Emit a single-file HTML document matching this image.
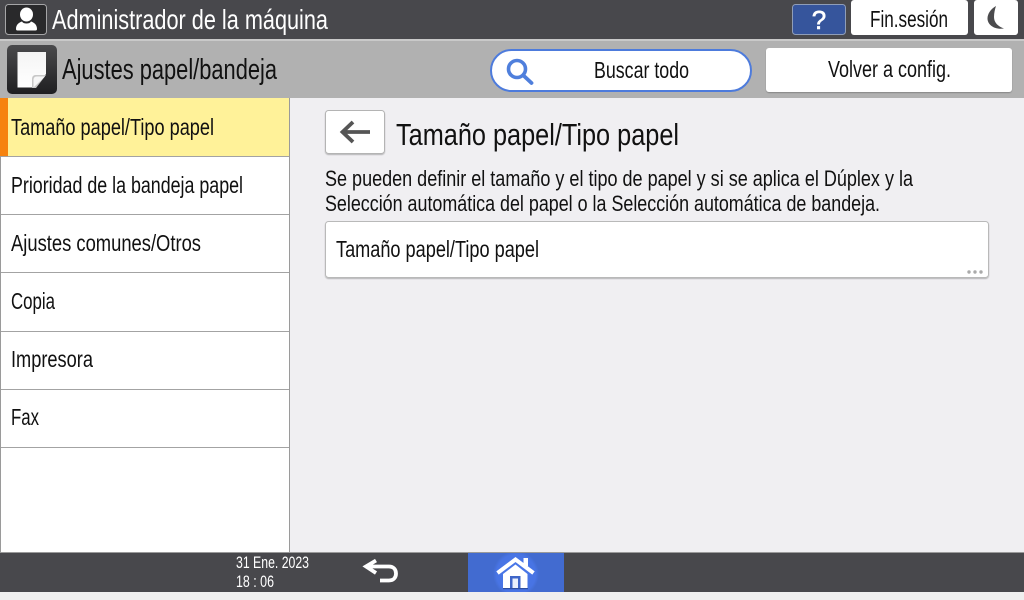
<!DOCTYPE html>
<html lang="es">
<head>
<meta charset="utf-8">
<title>Ajustes papel/bandeja</title>
<style>
html,body{margin:0;padding:0;width:1024px;height:600px;overflow:hidden;background:#f0eff2}
svg{display:block}
text{font-family:"Liberation Sans",sans-serif;fill:#111}
</style>
</head>
<body>
<svg width="1024" height="600" viewBox="0 0 1024 600" xmlns="http://www.w3.org/2000/svg">
<defs>
<linearGradient id="g1" x1="0" y1="0" x2="0" y2="1"><stop offset="0" stop-color="#4a4a4c"/><stop offset="1" stop-color="#1f1f21"/></linearGradient>
<linearGradient id="pg" x1="0" y1="0" x2="0" y2="1"><stop offset="0" stop-color="#f4f4f4"/><stop offset="1" stop-color="#ffffff"/></linearGradient>
<radialGradient id="hc" cx="0.5" cy="0.5" r="0.5"><stop offset="0" stop-color="#4a78ea"/><stop offset="0.85" stop-color="#4874e4"/><stop offset="1" stop-color="#426bd0"/></radialGradient>
<filter id="s" x="-5%" y="-10%" width="110%" height="130%"><feDropShadow dx="0" dy="1" stdDeviation="0.6" flood-color="#000" flood-opacity="0.25"/></filter>
<clipPath id="hb"><rect x="468" y="553" width="96" height="39"/></clipPath>
</defs>
<rect width="1024" height="600" fill="#f0eff2"/>
<!-- top bar -->
<rect width="1024" height="39" fill="#48484c"/>
<rect y="39" width="1024" height="2" fill="#c9c9c9"/>
<rect y="41" width="1024" height="57" fill="#b1b1b1"/>
<!-- user -->
<rect x="5.500" y="4.500" width="41" height="30" rx="3" fill="#29292b" stroke="#a5a5a7"/>
<ellipse cx="26.500" cy="14.500" rx="6.500" ry="7" fill="#fff"/>
<path d="M16 29c0-4.500 3-6.500 6-7.500 1 1.500 2.500 2 4.500 2s3.500-.5 4.500-2c3 1 6 3 6 7.500 0 1-.5 1.500-1.500 1.500h-18c-1 0-1.500-.5-1.500-1.500z" fill="#fff"/>
<text x="52" y="29" font-size="28" textLength="276" lengthAdjust="spacingAndGlyphs" style="fill:#fff">Administrador de la máquina</text>
<!-- help -->
<rect x="792.500" y="4.500" width="53" height="30" rx="3" fill="#36559c" stroke="#8f9db8"/>
<text x="819" y="29" font-size="26" text-anchor="middle" style="fill:#fff;stroke:#fff;stroke-width:.6">?</text>
<rect x="851" y="0" width="117" height="35" rx="3" fill="#fff"/>
<text x="870" y="27" font-size="23" textLength="78" lengthAdjust="spacingAndGlyphs">Fin.sesión</text>
<rect x="974" y="0" width="44" height="35" rx="3" fill="#fff"/>
<path d="M996 6C990.500 9 987.500 14 987.500 18.500 987.500 24.500 994 30 1004 28.500 998 26.500 994 22.500 994 17 994 13 995 9 996 6z" fill="#4b4b4d"/>
<!-- app title -->
<rect x="7" y="45" width="50" height="49" rx="5" fill="url(#g1)"/>
<path d="M17.500 52H46V74L36 87.500H17.500z" fill="url(#pg)"/>
<path d="M32 88V79c0-2.500 1.500-4 3.500-4H46L36 88z" fill="#c8c8c8"/>
<path d="M33.500 87.500V80c0-2 1-3.500 3-3.500H45z" fill="#f7f7f7"/>
<text x="62" y="79" font-size="29" textLength="215" lengthAdjust="spacingAndGlyphs">Ajustes papel/bandeja</text>
<!-- search -->
<rect x="491" y="50" width="260" height="41" rx="20.500" fill="#fff" stroke="#4d7bdc" stroke-width="2"/>
<circle cx="517" cy="69" r="8.500" fill="none" stroke="#4f7fdc" stroke-width="3.600"/>
<path d="M524 76l7.500 7" stroke="#4f7fdc" stroke-width="3.800" stroke-linecap="round"/>
<text x="594" y="78" font-size="23" textLength="95" lengthAdjust="spacingAndGlyphs">Buscar todo</text>
<rect x="766" y="48" width="246" height="44" rx="3" fill="#fff" filter="url(#s)"/>
<text x="828" y="77" font-size="23" textLength="123" lengthAdjust="spacingAndGlyphs">Volver a config.</text>
<!-- side menu -->
<rect x="0" y="98" width="290" height="455" fill="#9a9a9a"/>
<rect x="1" y="98" width="288" height="455" fill="#fff"/>
<rect x="0" y="98" width="289" height="58" fill="#fff299"/>
<rect x="0" y="98" width="8" height="58" fill="#f6830f"/>
<rect x="1" y="156" width="288" height="1" fill="#a3a3a3"/>
<rect x="1" y="214" width="288" height="1" fill="#a3a3a3"/>
<rect x="1" y="272" width="288" height="1" fill="#a3a3a3"/>
<rect x="1" y="331" width="288" height="1" fill="#a3a3a3"/>
<rect x="1" y="389" width="288" height="1" fill="#a3a3a3"/>
<rect x="1" y="447" width="288" height="1" fill="#a3a3a3"/>
<text x="11" y="135" font-size="23" textLength="203" lengthAdjust="spacingAndGlyphs">Tamaño papel/Tipo papel</text>
<text x="11" y="193" font-size="23" textLength="232" lengthAdjust="spacingAndGlyphs">Prioridad de la bandeja papel</text>
<text x="11" y="251" font-size="23" textLength="190" lengthAdjust="spacingAndGlyphs">Ajustes comunes/Otros</text>
<text x="11" y="309" font-size="23" textLength="44" lengthAdjust="spacingAndGlyphs">Copia</text>
<text x="11" y="367" font-size="23" textLength="82" lengthAdjust="spacingAndGlyphs">Impresora</text>
<text x="11" y="425" font-size="23" textLength="28" lengthAdjust="spacingAndGlyphs">Fax</text>
<!-- main -->
<rect x="325.500" y="110.500" width="59" height="43" rx="3" fill="#fff" stroke="#b4b4b4" filter="url(#s)"/>
<path d="M341.500 132H370M353 122L342.500 132 353 142" fill="none" stroke="#555" stroke-width="3.800"/>
<text x="396" y="145" font-size="31" textLength="283" lengthAdjust="spacingAndGlyphs">Tamaño papel/Tipo papel</text>
<text x="325" y="186" font-size="22.500" textLength="588" lengthAdjust="spacingAndGlyphs">Se pueden definir el tamaño y el tipo de papel y si se aplica el Dúplex y la</text>
<text x="325" y="211" font-size="22.500" textLength="555" lengthAdjust="spacingAndGlyphs">Selección automática del papel o la Selección automática de bandeja.</text>
<rect x="325.500" y="221.500" width="663" height="56" rx="3" fill="#fff" stroke="#b9b9b9" filter="url(#s)"/>
<text x="336" y="257" font-size="23" textLength="203" lengthAdjust="spacingAndGlyphs">Tamaño papel/Tipo papel</text>
<circle cx="969" cy="272" r="1.700" fill="#aaa"/><circle cx="975" cy="272" r="1.700" fill="#aaa"/><circle cx="981" cy="272" r="1.700" fill="#aaa"/>
<!-- bottom bar -->
<rect y="553" width="1024" height="39" fill="#48484c"/>
<rect y="552" width="1024" height="1" fill="#9a9a9a"/>
<rect y="592" width="1024" height="8" fill="#efefef"/>
<text x="236" y="568" font-size="16.500" textLength="73" lengthAdjust="spacingAndGlyphs" style="fill:#fff">31 Ene. 2023</text>
<text x="236" y="587" font-size="16.500" textLength="38" lengthAdjust="spacingAndGlyphs" style="fill:#fff">18 : 06</text>
<path d="M376 560.500L366 566.500 376 573M366 566.500H389C393.500 566.500 396 569.500 396 573.500 396 577.500 393.500 580.500 389 580.500H380" fill="none" stroke="#fff" stroke-width="3.800"/>
<rect x="468" y="553" width="96" height="39" fill="#426bd0"/>
<g clip-path="url(#hb)"><circle cx="516" cy="574" r="23" fill="url(#hc)"/></g>
<path d="M497.500 573L515.500 559.500 533.500 573" fill="none" stroke="#fff" stroke-width="4"/>
<rect x="523.500" y="558" width="4.500" height="8" fill="#fff"/>
<path d="M503 574L515.500 564.500 527.500 574V588H503z" fill="#fff"/>
<rect x="503" y="588" width="25" height="1.200" fill="#2f4f9f"/>
<rect x="510" y="576" width="10.500" height="12" fill="#3f66c8"/>
<rect x="512.500" y="578.500" width="5.500" height="9.500" fill="#eaf0fb"/>
</svg>
</body>
</html>
